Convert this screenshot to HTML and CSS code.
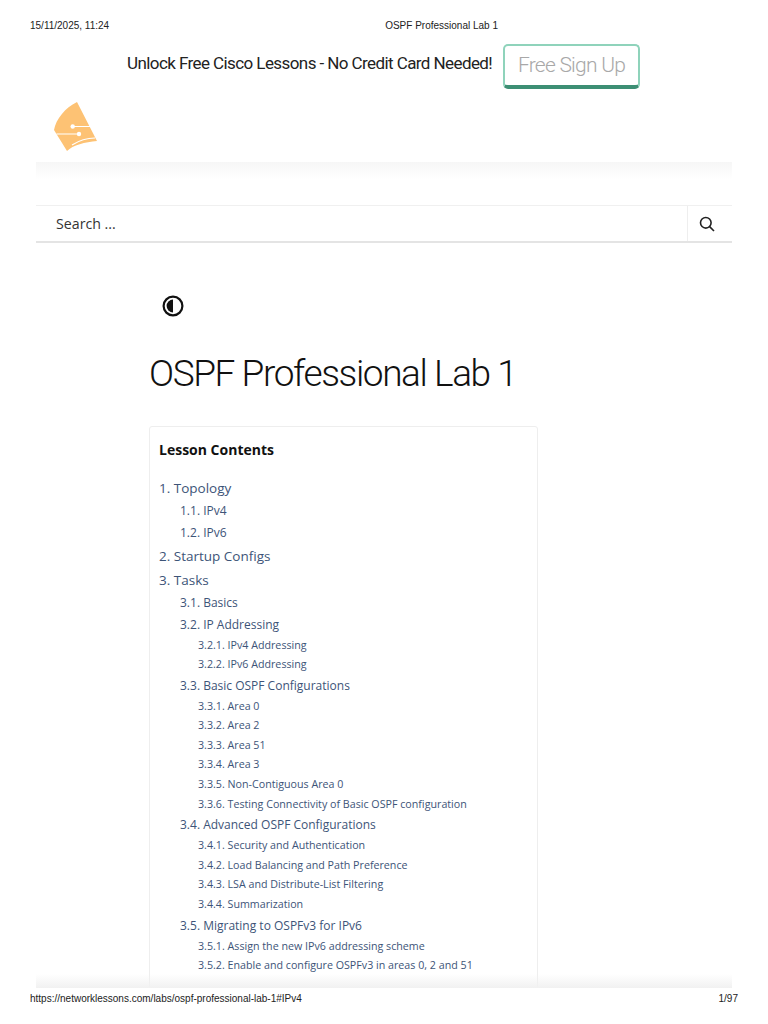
FILE: index.html
```html
<!DOCTYPE html>
<html lang="en">
<head>
  <meta charset="UTF-8">
  <title>OSPF Professional Lab 1</title>
  <meta name="viewport" content="width=device-width, initial-scale=1.0">
  <link rel="stylesheet" href="styles.css">
</head>
<body>
  <div class="print-head">
    <span class="print-date">15/11/2025, 11:24</span>
    <span class="print-title">OSPF Professional Lab 1</span>
  </div>

  <div class="sheet">
    <div class="promo">
      <span class="promo-text">Unlock Free Cisco Lessons - No Credit Card Needed!</span>
      <a class="promo-btn">Free Sign Up</a>
    </div>

    <header class="site-head">
      <svg class="logo" width="44" height="50" viewBox="0 0 44 50">
        <path class="logo-sail" d="M23 0C11 6 2 17 0 28L13 49C19 43 31 40 43 39Z"/>
        <path class="logo-line" d="M18.7 24.5H37M2.5 32H25M18 43C25 38.5 33 36 41 36"/>
        <circle class="logo-dot" cx="18.7" cy="24.5" r="2.2"/>
        <circle class="logo-dot" cx="25" cy="32" r="2.2"/>
      </svg>
    </header>
    <div class="head-shadow"></div>

    <form class="search">
      <span class="search-text">Search ...</span>
      <span class="search-btn">
        <svg width="16" height="16" viewBox="0 0 16 16">
          <circle cx="6.8" cy="6.8" r="5.3"/>
          <path d="M10.6 10.6L15 15"/>
        </svg>
      </span>
    </form>

    <main class="content">
      <svg class="contrast" width="22" height="22" viewBox="0 0 22 22">
        <circle class="contrast-ring" cx="11" cy="11" r="9.4"/>
        <path class="contrast-half" d="M11 4.6A6.4 6.4 0 0 0 11 17.4Z"/>
      </svg>

      <h1>OSPF Professional Lab 1</h1>

      <nav class="toc">
        <p class="toc-title">Lesson Contents</p>
        <ul class="lvl1">
          <li>1. Topology
            <ul class="lvl2">
              <li>1.1. IPv4</li>
              <li>1.2. IPv6</li>
            </ul>
          </li>
          <li>2. Startup Configs</li>
          <li>3. Tasks
            <ul class="lvl2">
              <li>3.1. Basics</li>
              <li>3.2. IP Addressing
                <ul class="lvl3">
                  <li>3.2.1. IPv4 Addressing</li>
                  <li>3.2.2. IPv6 Addressing</li>
                </ul>
              </li>
              <li>3.3. Basic OSPF Configurations
                <ul class="lvl3">
                  <li>3.3.1. Area 0</li>
                  <li>3.3.2. Area 2</li>
                  <li>3.3.3. Area 51</li>
                  <li>3.3.4. Area 3</li>
                  <li>3.3.5. Non-Contiguous Area 0</li>
                  <li>3.3.6. Testing Connectivity of Basic OSPF configuration</li>
                </ul>
              </li>
              <li>3.4. Advanced OSPF Configurations
                <ul class="lvl3">
                  <li>3.4.1. Security and Authentication</li>
                  <li>3.4.2. Load Balancing and Path Preference</li>
                  <li>3.4.3. LSA and Distribute-List Filtering</li>
                  <li>3.4.4. Summarization</li>
                </ul>
              </li>
              <li>3.5. Migrating to OSPFv3 for IPv6
                <ul class="lvl3">
                  <li>3.5.1. Assign the new IPv6 addressing scheme</li>
                  <li>3.5.2. Enable and configure OSPFv3 in areas 0, 2 and 51</li>
                </ul>
              </li>
            </ul>
          </li>
        </ul>
      </nav>
    </main>
    <div class="foot-shadow"></div>
  </div>

  <div class="print-foot">
    <span>https://networklessons.com/labs/ospf-professional-lab-1#IPv4</span>
    <span>1/97</span>
  </div>
</body>
</html>
```

FILE: styles.css
```css
* {
  box-sizing: border-box;
}

html, body {
  margin: 0;
  height: 1024px;
  overflow: hidden;
  background: #fff;
}

body {
  font-family: "Open Sans", "Noto Sans", sans-serif;
  color: #222;
}

.print-head, .print-foot {
  font-family: "Liberation Sans", Arial, sans-serif;
  font-size: 10px;
  color: #222;
  padding: 0 30px;
  display: flex;
}

.print-head {
  height: 44px;
  padding-top: 20px;
}

.print-title {
  margin-left: 276px;
}

.print-foot {
  height: 36px;
  padding-top: 5px;
  justify-content: space-between;
}

.print-foot span {
  white-space: nowrap;
}

.sheet {
  height: 944px;
  margin: 0 36px;
  overflow: hidden;
  position: relative;
}

.promo {
  height: 45px;
  display: flex;
  align-items: flex-start;
  padding-left: 91px;
}

.promo-text {
  font-family: Roboto, sans-serif;
  font-size: 17px;
  letter-spacing: -0.58px;
  line-height: 38px;
  color: #222;
  width: 376px;
  white-space: nowrap;
}

.promo-btn {
  width: 137px;
  height: 45px;
  border: 2px solid #8fd3bb;
  border-bottom: 4px solid #3d8f74;
  border-radius: 5px;
  font-family: Roboto, sans-serif;
  font-weight: 300;
  font-size: 21px;
  letter-spacing: -0.75px;
  line-height: 39px;
  text-align: center;
  color: #a8a8a8;
}

.site-head {
  height: 73px;
  padding: 13px 0 0 18px;
}

.logo {
  display: block;
}

.logo-sail {
  fill: #fdc274;
}

.logo-line {
  fill: none;
  stroke: #fff;
  stroke-width: 1.2;
}

.logo-dot {
  fill: #fff;
}

.head-shadow {
  height: 18px;
  background: linear-gradient(#f6f6f6, #fff);
}

.search {
  margin-top: 25px;
  height: 38px;
  display: flex;
  border-top: 1px solid #f0f0f0;
  border-bottom: 2px solid #e4e4e4;
}

.search-text {
  flex: 1;
  padding-left: 20px;
  font-size: 14.2px;
  line-height: 35px;
  color: #333;
}

.search-btn {
  width: 45px;
  border-left: 1px solid #eee;
  padding: 10px 0 0 11px;
}

.search-btn svg {
  display: block;
  fill: none;
  stroke: #222;
  stroke-width: 1.6;
}

.content {
  padding: 52px 0 0 113px;
}

.contrast {
  display: block;
  margin-left: 13px;
}

.contrast-ring {
  fill: none;
  stroke: #111;
  stroke-width: 2.2;
}

.contrast-half {
  fill: #111;
}

h1 {
  margin: 32px 0 27px;
  font-family: Roboto, sans-serif;
  font-weight: 300;
  font-size: 37px;
  letter-spacing: -1.4px;
  line-height: 50px;
  color: #111;
  white-space: nowrap;
}

.toc {
  width: 389px;
  height: 640px;
  border: 1px solid #eee;
  border-radius: 3px;
  padding: 13px 9px;
}

.toc-title {
  margin: 0 0 15.5px;
  font-size: 14px;
  font-weight: 700;
  line-height: 20px;
  color: #111;
}

.toc ul {
  list-style: none;
  margin: 0;
  padding: 0;
}

.lvl1 {
  font-size: 13.5px;
  line-height: 24px;
  color: #3d5478;
}

.toc .lvl2 {
  padding-left: 21px;
  font-size: 12px;
  line-height: 22px;
}

.toc .lvl3 {
  padding-left: 18px;
  font-size: 10.7px;
  line-height: 19.6px;
}

.foot-shadow {
  position: absolute;
  left: 0;
  right: 0;
  bottom: 0;
  height: 14px;
  background: linear-gradient(rgba(238, 238, 238, 0), #f1f1f1);
}
```
